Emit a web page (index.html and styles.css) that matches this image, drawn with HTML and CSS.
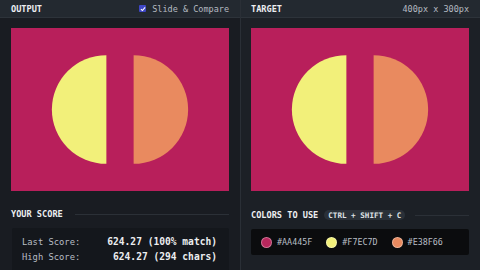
FILE: index.html
```html
<!DOCTYPE html>
<html>
<head>
<meta charset="utf-8">
<link rel="stylesheet" href="styles.css">
</head>
<body>
<div class="app">
  <section class="panel panel-left">
    <header class="panel-head">
      <span class="title">OUTPUT</span>
      <label class="toggle"><span class="check"><svg viewBox="0 0 8 8" width="6" height="6"><path d="M1.2 4.2 L3.2 6 L6.8 1.8" fill="none" stroke="#fff" stroke-width="1.4"/></svg></span>Slide &amp; Compare</label>
    </header>
    <div class="canvas">
      <svg viewBox="0 0 400 300" preserveAspectRatio="none" width="218" height="163">
        <rect width="400" height="300" fill="#b81f5b"/>
        <path d="M175 50 A100 100 0 0 0 175 250 Z" fill="#f2f07a"/>
        <path d="M225 50 A100 100 0 0 1 225 250 Z" fill="#e98a5f"/>
      </svg>
    </div>
    <div class="section-title">YOUR SCORE</div>
    <div class="score-box">
      <div class="score-row"><span class="label">Last Score:</span><span class="value">624.27 (100% match)</span></div>
      <div class="score-row"><span class="label">High Score:</span><span class="value">624.27 (294 chars)</span></div>
    </div>
  </section>
  <section class="panel panel-right">
    <header class="panel-head">
      <span class="title">TARGET</span>
      <span class="dims">400px x 300px</span>
    </header>
    <div class="canvas">
      <svg viewBox="0 0 400 300" preserveAspectRatio="none" width="218" height="163">
        <rect width="400" height="300" fill="#b81f5b"/>
        <path d="M175 50 A100 100 0 0 0 175 250 Z" fill="#f2f07a"/>
        <path d="M225 50 A100 100 0 0 1 225 250 Z" fill="#e98a5f"/>
      </svg>
    </div>
    <div class="section-title">COLORS TO USE <span class="pill">CTRL + SHIFT + C</span></div>
    <div class="colors-box">
      <div class="swatch"><span class="dot dot-pink"></span>#AA445F</div>
      <div class="swatch"><span class="dot dot-yellow"></span>#F7EC7D</div>
      <div class="swatch"><span class="dot dot-orange"></span>#E38F66</div>
    </div>
  </section>
</div>
</body>
</html>
```
FILE: styles.css
```css
* { box-sizing: border-box; }
html, body { margin: 0; padding: 0; }
body {
  width: 480px;
  height: 270px;
  overflow: hidden;
  background: #1a1e24;
  font-family: "DejaVu Sans Mono", "Liberation Mono", monospace;
  color: #e4e6e9;
}
.app {
  display: grid;
  grid-template-columns: 241px 239px;
  height: 270px;
}
.panel {
  display: flex;
  flex-direction: column;
  min-width: 0;
}
.panel-left {
  border-right: 1px solid #2a2f36;
  background: #191c22;
}
.panel-right {
  background: #1c2026;
}
.panel-head {
  height: 18px;
  background: #232930;
  border-bottom: 1px solid #2d333a;
  display: flex;
  align-items: center;
  justify-content: space-between;
  padding: 0 11px;
}
.panel-right .panel-head { padding: 0 11px 0 10px; }
.title {
  font-size: 8.6px;
  font-weight: bold;
  color: #eceef0;
  letter-spacing: 0;
}
.toggle, .dims {
  font-size: 8.5px;
  color: #b4bac1;
  display: flex;
  align-items: center;
}
.check {
  width: 7px;
  height: 7px;
  background: #3f47c6;
  border-radius: 1px;
  display: inline-flex;
  align-items: center;
  justify-content: center;
  margin-right: 6px;
}
.check svg { display: block; }
.canvas {
  margin: 10px 11px 0 11px;
  height: 163px;
}
.panel-right .canvas { margin: 10px 11px 0 10px; }
.canvas svg { display: block; }
.section-title {
  margin: 18px 11px 0 11px;
  height: 10px;
  display: flex;
  align-items: center;
  font-size: 8.6px;
  font-weight: bold;
  color: #eceef0;
  white-space: nowrap;
}
.section-title::after {
  content: "";
  flex: 1;
  height: 1px;
  background: #2b3037;
  margin-left: 12px;
}
.panel-right .section-title { margin: 19px 11px 0 10px; }
.panel-right .section-title::after { margin-left: 10px; }
.pill {
  margin-left: 6px;
  height: 10px;
  padding: 0 4px;
  border-radius: 5px;
  background: #2a3038;
  font-size: 7.6px;
  color: #dfe2e6;
  display: inline-flex;
  align-items: center;
}
.score-box {
  margin: 9px 11px 0 12px;
  background: #14171c;
  border-radius: 2px;
  padding: 6px 12px 6px 10px;
  flex: 1;
}
.score-row {
  display: flex;
  justify-content: space-between;
  align-items: center;
  height: 15.3px;
}
.label {
  font-size: 8.8px;
  color: #b8bdc4;
}
.value {
  font-size: 9.6px;
  font-weight: bold;
  color: #eceef0;
}
.colors-box {
  margin: 9px 11px 0 10px;
  height: 26px;
  background: #0b0c0e;
  border-radius: 2px;
  display: flex;
  align-items: center;
  padding-left: 10px;
  gap: 14px;
}
.swatch {
  display: flex;
  align-items: center;
  gap: 5px;
  font-size: 8.4px;
  color: #b8bdc4;
}
.dot {
  width: 11px;
  height: 11px;
  border-radius: 50%;
  border: 1px solid rgba(255,255,255,0.35);
}
.dot-pink { background: #b8275d; }
.dot-yellow { background: #f2f07a; }
.dot-orange { background: #e98a5f; }
```
